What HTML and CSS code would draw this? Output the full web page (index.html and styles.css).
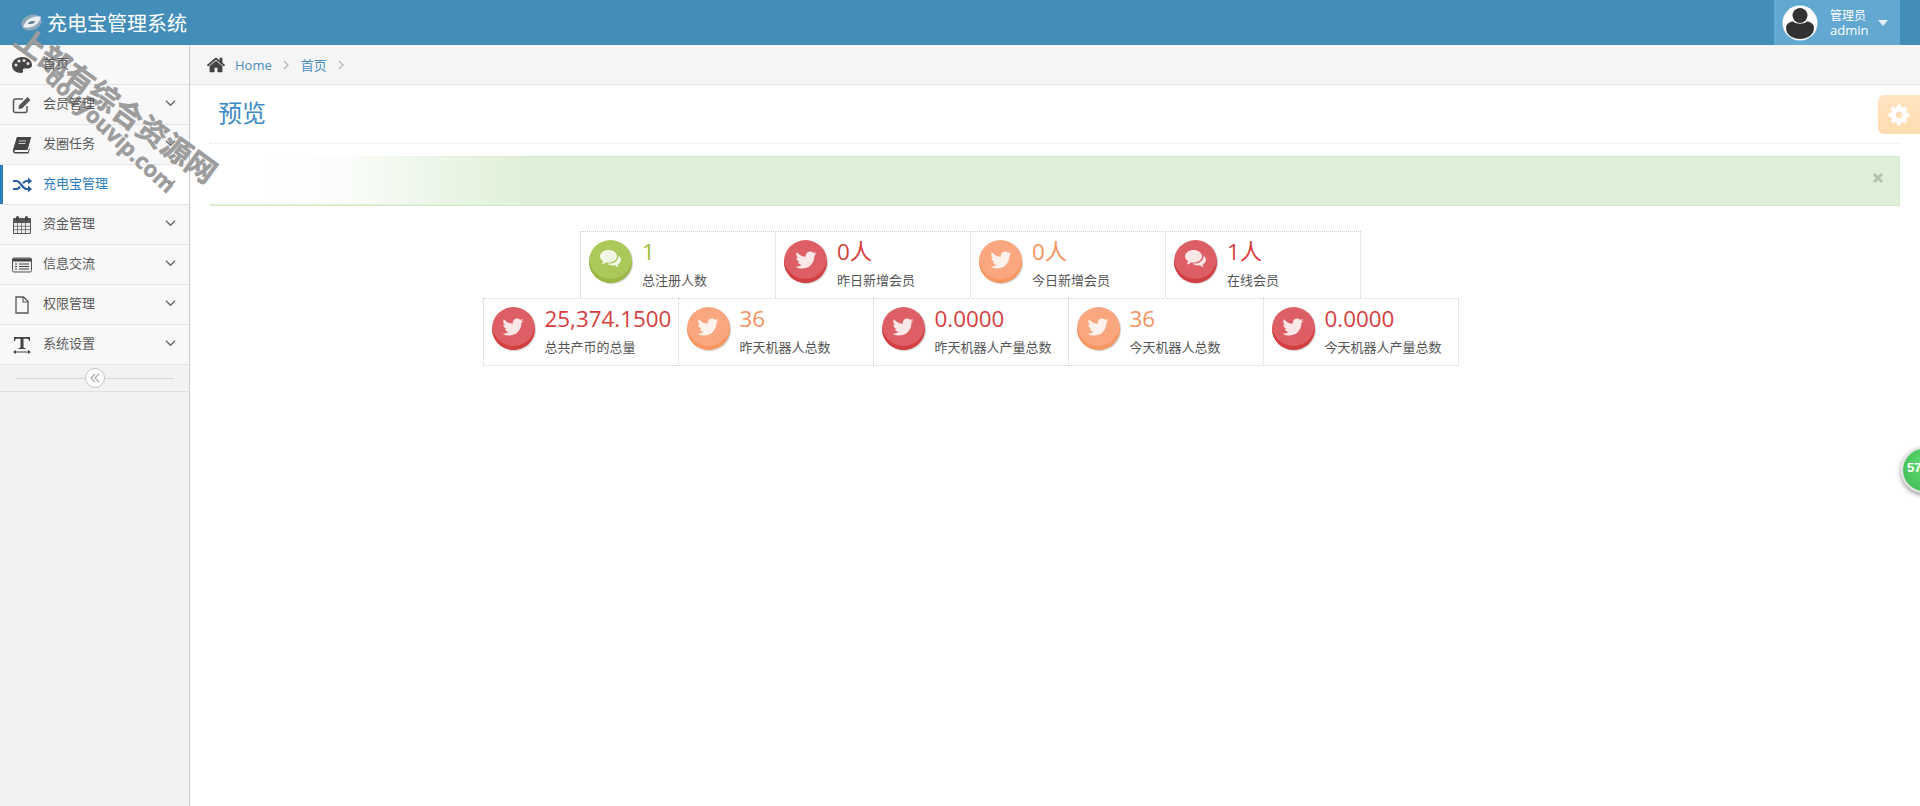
FILE: index.html
```html
<!DOCTYPE html>
<html lang="zh-CN">
<head>
<meta charset="utf-8">
<title>充电宝管理系统</title>
<link rel="stylesheet" href="styles.css">
</head>
<body>
<svg class="defs" width="0" height="0" aria-hidden="true">
  <symbol id="tw" viewBox="0 0 1792 1792"><path d="M1684 408q-67 98-162 167 1 14 1 42 0 130-38 259.500t-115.500 248.500-184.500 210.500-258 146-323 54.500q-271 0-496-145 35 4 76 4 225 0 401-138-105-2-188-64.500t-114-159.500q33 5 61 5 43 0 85-11-112-23-185.500-111.500t-73.500-205.500v-4q68 38 146 41-66-44-105-115t-39-154q0-88 44-163 121 149 294.500 238.500t371.500 99.500q-8-38-8-74 0-134 94.500-228.500t228.500-94.500q140 0 236 102 109-21 205-78-37 115-142 178 92-10 184-50z"/></symbol>
  <symbol id="cm" viewBox="0 0 24 22"><path d="M9.500 1C4.800 1 1 3.800 1 7.300c0 2 1.300 3.800 3.200 5-.2 1.200-.9 2.200-1.700 3 1.700-.2 3.300-.9 4.500-1.900.8.200 1.600.2 2.500.2 4.700 0 8.500-2.800 8.500-6.300S14.200 1 9.500 1z"/><path d="M19.400 6.500c.1.300.1.600.1.900 0 4-4.200 7.200-9.500 7.200-.8 0-1.100 0-1.700-.1 1.300 1.300 3.300 2 5.700 2 .7 0 1.300 0 2-.2 1 .9 2.300 1.500 4 1.800-.7-.8-1.200-1.600-1.400-2.700 2-1 3.400-2.600 3.400-4.500 0-1.800-1.100-3.300-2.600-4.400z"/></symbol>
  <symbol id="cv" viewBox="0 0 12 8"><path d="M1 1.500l5 5 5-5" fill="none" stroke="currentColor" stroke-width="1.300"/></symbol>
</svg>

<header class="topbar">
  <div class="brand">
    <svg class="logo" viewBox="0 0 24 20"><ellipse cx="12" cy="10" rx="11" ry="8" fill="#8fa9ba" transform="rotate(-18 12 10)"/><path d="M3 15C7 4 16 3 22 4 20 12 13 17 3 15z" fill="#e8eef2"/><path d="M8 11c3-3 6-3 8-2-2 3-5 3-8 2z" fill="#5f7d91"/></svg>
    <span>充电宝管理系统</span>
  </div>
  <div class="user">
    <svg class="avatar" viewBox="0 0 36 36"><circle cx="18" cy="18" r="17.500" fill="#fff"/><circle cx="18" cy="10.500" r="7.500" fill="#333"/><path d="M4 23c0-5 5-6.500 7-6.500 4 3 10 3 14 0 2 0 7 1.500 7 6.500 0 7-7 11-14 11S4 30 4 23z" fill="#333"/></svg>
    <div class="user-text"><small>管理员</small><span>admin</span></div>
    <i class="caret"></i>
  </div>
</header>

<div class="layout">
  <nav class="sidebar">
    <ul class="menu">
      <li class="item">
        <svg class="ic" viewBox="0 0 20 18"><path d="M10 1C4.500 1 0 4.800 0 9.500 0 14 4 17 9 17c2 0 2.500-1 2-2.200-.6-1.400.2-2.300 1.700-2.300H16c2.500 0 4-1.300 4-3.500C20 4.500 15.500 1 10 1z" fill="#444"/><circle cx="4" cy="9" r="1.600" fill="#ddd"/><circle cx="7" cy="5" r="1.600" fill="#ddd"/><circle cx="12" cy="4.500" r="1.600" fill="#ddd"/><circle cx="16" cy="7.500" r="1.600" fill="#ddd"/></svg>
        <span class="label">首页</span>
      </li>
      <li class="item">
        <svg class="ic" viewBox="0 0 20 18"><path d="M15 10v4.500a2 2 0 0 1-2 2H3.500a2 2 0 0 1-2-2V5a2 2 0 0 1 2-2H11" fill="none" stroke="#555" stroke-width="1.500"/><path d="M7 9.500L15.500 1 18.500 4 10 12.500 6.500 13z" fill="#555"/></svg>
        <span class="label">会员管理</span>
        <svg class="chev"><use href="#cv"/></svg>
      </li>
      <li class="item">
        <svg class="ic" viewBox="0 0 20 18"><path d="M5 1h14l-3.500 13H3.500C2 14 2 16 3.500 16H16l1-3.500.8.500L16.500 17.500H3.500C1 17.500 .5 15 1.200 13z" fill="#444"/><path d="M5 1h14l-3.500 12H2z" fill="#444"/><path d="M7 5h7M6.500 7.500h7" stroke="#ccc"/></svg>
        <span class="label">发圈任务</span>
        <svg class="chev"><use href="#cv"/></svg>
      </li>
      <li class="item active">
        <svg class="ic" viewBox="0 0 20 16"><path d="M1 4h3.500c4 0 6 8 10 8H17M1 12h3.500c1.500 0 2.600-1 3.600-2.200M11 6.200C12 5 13 4 14.500 4H17" fill="none" stroke="#2a5f9e" stroke-width="2.200"/><path d="M16 .5L20 4l-4 3.500zM16 8.500l4 3.500-4 3.500z" fill="#2a5f9e"/></svg>
        <span class="label">充电宝管理</span>
        <svg class="chev"><use href="#cv"/></svg>
      </li>
      <li class="item">
        <svg class="ic" viewBox="0 0 20 20"><path d="M2 3h16a1 1 0 0 1 1 1v14a1 1 0 0 1-1 1H2a1 1 0 0 1-1-1V4a1 1 0 0 1 1-1z" fill="#555"/><path d="M2 8h16v10H2z" fill="#eee"/><path d="M5.500 8v10M9.500 8v10M13.500 8v10M2 11.300h16M2 14.600h16" stroke="#666" stroke-width=".8"/><rect x="4" y="1" width="3" height="5" rx="1.500" fill="#444"/><rect x="13" y="1" width="3" height="5" rx="1.500" fill="#444"/></svg>
        <span class="label">资金管理</span>
        <svg class="chev"><use href="#cv"/></svg>
      </li>
      <li class="item">
        <svg class="ic" viewBox="0 0 20 16"><rect x=".5" y="1" width="19" height="14" rx="1.500" fill="#eee" stroke="#555"/><path d="M.5 1.500h19v3H.5z" fill="#444"/><path d="M3 7h2M3 9.500h2M3 12h2M7 7h10M7 9.500h10M7 12h10" stroke="#444" stroke-width="1.200"/></svg>
        <span class="label">信息交流</span>
        <svg class="chev"><use href="#cv"/></svg>
      </li>
      <li class="item">
        <svg class="ic" viewBox="0 0 20 18"><path d="M4 1h7.500l4.500 4.500V17H4z" fill="none" stroke="#555" stroke-width="1.300"/><path d="M11 1v5h5" fill="none" stroke="#555" stroke-width="1.100"/></svg>
        <span class="label">权限管理</span>
        <svg class="chev"><use href="#cv"/></svg>
      </li>
      <li class="item">
        <svg class="ic" viewBox="0 0 20 18"><path d="M2 1h16v4h-1c0-1.500-.6-2.200-2-2.200h-3.500V11c0 .8.600 1 2 1.100V13H6.500v-.9c1.400-.1 2-.3 2-1.100V2.800H5C3.600 2.800 3 3.500 3 5H2z" fill="#444"/><path d="M3 16h14" stroke="#444"/><path d="M1 16l3-2v4zM19 16l-3-2v4z" fill="#444"/></svg>
        <span class="label">系统设置</span>
        <svg class="chev"><use href="#cv"/></svg>
      </li>
    </ul>
    <div class="collapse"><div class="collapse-btn"><svg class="dbl" viewBox="0 0 12 12"><path d="M6 2L2 6l4 4M10 2L6 6l4 4" fill="none" stroke="#aaa" stroke-width="1.200"/></svg></div></div>
  </nav>

  <main class="main">
    <div class="crumbs">
      <svg class="home" viewBox="0 0 1792 1792"><path d="M1472 992v480q0 26-19 45t-45 19h-384v-384H768v384H384q-26 0-45-19t-19-45V992q0-1 .5-3t.5-3l575-474 575 474q1 2 1 6zm223-69l-62 74q-8 9-21 11h-3q-13 0-21-7L896 424l-692 577q-12 8-24 7-13-2-21-11l-62-74q-8-10-7-23.500t11-21.500l719-599q32-26 76-26t76 26l244 204V288q0-14 9-23t23-9h192q14 0 23 9t9 23v408l219 182q10 8 11 21.500t-7 23.500z"/></svg>
      <a class="crumb">Home</a>
      <svg class="sep" viewBox="0 0 8 12"><path d="M2 2l4 4-4 4" fill="none" stroke="#b2b6bf" stroke-width="1.300"/></svg>
      <a class="crumb">首页</a>
      <svg class="sep" viewBox="0 0 8 12"><path d="M2 2l4 4-4 4" fill="none" stroke="#b2b6bf" stroke-width="1.300"/></svg>
    </div>

    <div class="content">
      <h1 class="title">预览</h1>
      <div class="alert">
        <svg class="close" viewBox="0 0 12 12"><path d="M2 2l8 8M10 2l-8 8" stroke="#b3c4ab" stroke-width="3"/></svg>
      </div>
      <div class="stats">
        <div class="row">
          <div class="box green"><div class="disc"><svg class="glyph"><use href="#cm"/></svg></div><div class="data"><b>1</b><span>总注册人数</span></div></div>
          <div class="box red"><div class="disc"><svg class="glyph"><use href="#tw"/></svg></div><div class="data"><b>0人</b><span>昨日新增会员</span></div></div>
          <div class="box orange"><div class="disc"><svg class="glyph"><use href="#tw"/></svg></div><div class="data"><b>0人</b><span>今日新增会员</span></div></div>
          <div class="box red"><div class="disc"><svg class="glyph"><use href="#cm"/></svg></div><div class="data"><b>1人</b><span>在线会员</span></div></div>
        </div>
        <div class="row">
          <div class="box red"><div class="disc"><svg class="glyph"><use href="#tw"/></svg></div><div class="data"><b>25,374.1500</b><span>总共产币的总量</span></div></div>
          <div class="box orange"><div class="disc"><svg class="glyph"><use href="#tw"/></svg></div><div class="data"><b>36</b><span>昨天机器人总数</span></div></div>
          <div class="box red"><div class="disc"><svg class="glyph"><use href="#tw"/></svg></div><div class="data"><b>0.0000</b><span>昨天机器人产量总数</span></div></div>
          <div class="box orange"><div class="disc"><svg class="glyph"><use href="#tw"/></svg></div><div class="data"><b>36</b><span>今天机器人总数</span></div></div>
          <div class="box red"><div class="disc"><svg class="glyph"><use href="#tw"/></svg></div><div class="data"><b>0.0000</b><span>今天机器人产量总数</span></div></div>
        </div>
      </div>
    </div>
  </main>
</div>

<div class="settings-tab">
  <svg class="gear" viewBox="0 0 1792 1792"><path fill-rule="evenodd" d="M1152 896q0-106-75-181t-181-75-181 75-75 181 75 181 181 75 181-75 75-181zm512-109v222q0 12-8 23t-20 13l-185 28q-19 54-39 91 35 50 107 138 10 12 10 25t-9 23q-27 37-99 108t-94 71q-12 0-26-9l-138-108q-44 23-91 38-16 136-29 186-7 28-36 28h-222q-14 0-24.500-8.500t-11.500-21.500l-28-184q-49-16-90-37l-141 107q-10 9-25 9-14 0-25-11-126-114-165-168-7-10-7-23 0-12 8-23 15-21 51-66.500t54-70.500q-27-50-41-99l-183-27q-13-2-21-12.500t-8-23.500v-222q0-12 8-23t19-13l186-28q14-46 39-92-40-57-107-138-10-12-10-24 0-10 9-23 26-36 98.500-107.500t94.500-71.500q13 0 26 10l138 107q44-23 91-38 16-136 29-186 7-28 36-28h222q14 0 24.500 8.500t11.500 21.500l28 184q49 16 90 37l142-107q9-9 24-9 13 0 25 10 129 119 165 170 7 8 7 22 0 12-8 23-15 21-51 66.500t-54 70.500q26 50 41 98l183 28q13 2 21 12.500t8 23.500z"/></svg>
</div>
<div class="ball"><span>57</span></div>
<div class="mark mark-a">上部有综合资源网</div>
<div class="mark mark-b">douyouvip.com</div>
</body>
</html>
```
FILE: styles.css
```css
* { box-sizing: border-box; }
html, body { margin: 0; height: 100%; overflow: hidden; }
body {
  font-family: "Open Sans", "Noto Sans CJK SC", sans-serif;
  font-size: 13px;
  color: #393939;
  background: #fff;
  position: relative;
}
.defs { position: absolute; }
.topbar {
  height: 45px;
  background: #438eb9;
  display: flex;
  justify-content: space-between;
  padding-right: 20px;
}
.brand {
  display: flex;
  align-items: center;
  gap: 4px;
  padding-left: 20px;
  color: #fff;
  font-size: 20px;
}
.logo { width: 23px; height: 19px; }
.user {
  width: 126px;
  background: #62a8d1;
  display: flex;
  align-items: center;
  padding-left: 8px;
  color: #fff;
}
.avatar { width: 36px; height: 36px; flex: none; }
.user-text {
  margin-left: 12px;
  display: flex;
  flex-direction: column;
  font-size: 13px;
  line-height: 15px;
}
.user-text small { font-size: 12px; line-height: 15px; }
.caret {
  margin-left: 10px;
  border: 5px solid transparent;
  border-top: 6px solid #e8f0f5;
  border-bottom: 0;
}
.layout { display: flex; height: 761px; }
.sidebar {
  width: 190px;
  flex: none;
  background: #f2f2f2;
  border-right: 1px solid #ccc;
}
.menu { list-style: none; margin: 0; padding: 0; }
.item {
  height: 40px;
  display: flex;
  align-items: center;
  position: relative;
  background: #f8f8f8;
  border-bottom: 1px solid #e5e5e5;
  color: #585858;
  padding-left: 12px;
}
.item.active {
  background: #fff;
  color: #2b7dbc;
  box-shadow: inset 3px 0 0 #2b7dbc;
}
.ic { width: 20px; height: 20px; flex: none; }
.label { margin-left: 11px; flex: 1; position: relative; top: -2px; z-index: 2; }
.chev { width: 11px; height: 8px; margin-right: 13px; color: #666; position: relative; top: -2px; }
.collapse {
  height: 27px;
  border-bottom: 1px solid #e0e0e0;
  display: flex;
  align-items: center;
  justify-content: center;
  position: relative;
}
.collapse::before {
  content: "";
  position: absolute;
  left: 15px;
  right: 15px;
  top: 13px;
  border-top: 1px solid #d8d8d8;
}
.collapse-btn {
  position: relative;
  width: 20px;
  height: 20px;
  border-radius: 50%;
  border: 1px solid #c4c4c4;
  background: #fff;
  display: flex;
  align-items: center;
  justify-content: center;
}
.dbl { width: 12px; height: 12px; }
.main { flex: 1; min-width: 0; }
.crumbs {
  height: 40px;
  background: #f5f5f5;
  border-bottom: 1px solid #e5e5e5;
  display: flex;
  align-items: center;
  padding-left: 16px;
}
.home { width: 20px; height: 20px; fill: #444; flex: none; }
.crumb { color: #4c8fbd; margin-left: 9px; }
.crumb + .sep + .crumb { margin-left: 11px; }
.sep { width: 8px; height: 12px; margin-left: 10px; flex: none; }
.content { padding: 0 20px; }
.title {
  margin: 0;
  height: 59px;
  border-bottom: 1px dotted #e2e2e2;
  padding: 11px 8px 0;
  font-size: 24px;
  line-height: 33px;
  font-weight: 400;
  color: #3d8ac4;
}
.alert {
  position: relative;
  height: 50px;
  margin-top: 12px;
  background: #dff0d8;
  border: 1px solid #d6e9c6;
  display: flex;
  align-items: center;
  justify-content: flex-end;
  padding: 0 15px 7px;
}
.alert::after {
  content: "";
  position: absolute;
  left: -2px;
  top: -2px;
  bottom: 1px;
  width: 320px;
  background: linear-gradient(90deg, #fff 0, #fff 60px, rgba(255,255,255,.9) 130px, rgba(255,255,255,.6) 190px, rgba(255,255,255,.3) 250px, rgba(255,255,255,0) 320px);
}
.close { width: 12px; height: 12px; }
.stats {
  margin-top: 26px;
  margin-left: -20px;
  padding-right: 148px;
  display: flex;
  flex-direction: column;
  align-items: center;
}
.row { display: flex; margin-top: -1px; }
.box {
  width: 196px;
  height: 68px;
  border: 1px dotted #d0d0d0;
  margin-left: -1px;
  display: flex;
  padding: 8px 0 0 9px;
  background: #fff;
}
.disc {
  width: 43px;
  height: 43px;
  margin-left: -1px;
  border-radius: 50%;
  flex: none;
  display: flex;
  align-items: center;
  justify-content: center;
  padding-bottom: 3px;
}
.glyph { width: 24px; height: 24px; fill: rgba(255,255,255,.85); }
.data { margin-left: 10px; display: flex; flex-direction: column; position: relative; top: -1px; }
.data b { font-size: 22.400px; line-height: 26px; font-weight: 400; }
.data span { font-size: 13px; line-height: 18px; color: #555; margin-top: 5px; position: relative; top: 1px; }
.green .disc { background: #abc95a; box-shadow: inset 0 -4px 0 #9bb643, 1px 1px 1px rgba(0,0,0,.2); }
.green b { color: #9fbc3c; }
.red .disc { background: #dd5f65; box-shadow: inset 0 -4px 0 #d33f41, 1px 1px 1px rgba(0,0,0,.2); }
.red b { color: #d53f40; }
.orange .disc { background: #faa67f; box-shadow: inset 0 -4px 0 #f99763, 1px 1px 1px rgba(0,0,0,.2); }
.orange b { color: #f79263; }
.settings-tab {
  position: absolute;
  right: 0;
  top: 95px;
  width: 42px;
  height: 39px;
  border-radius: 6px 0 0 6px;
  background: linear-gradient(#ffe4c2, #ffdcb0);
  display: flex;
  align-items: center;
  justify-content: center;
}
.gear { width: 24px; height: 24px; fill: #fff; }
.ball {
  position: absolute;
  left: 1901px;
  top: 447px;
  width: 46px;
  height: 46px;
  border-radius: 50%;
  background: radial-gradient(circle at 50% 40%, #5fdc72, #3cb653);
  border: 2px solid #e4e4e4;
  box-shadow: 0 2px 5px rgba(0,0,0,.45);
  color: #fff;
  font: bold 13px/38px "Liberation Sans", sans-serif;
  padding-left: 4px;
}
.mark {
  position: absolute;
  white-space: nowrap;
  color: #9c9c9c;
  font-weight: 700;
  transform-origin: 0 50%;
  pointer-events: none;
  -webkit-text-stroke: .5px #9c9c9c;
}
.mark-a {
  left: 19px;
  top: 15px;
  font-size: 30px;
  line-height: 40px;
  transform: rotate(36deg);
}
.mark-b {
  left: 50px;
  top: 58px;
  font-size: 22px;
  line-height: 30px;
  transform: rotate(43deg);
}
```
